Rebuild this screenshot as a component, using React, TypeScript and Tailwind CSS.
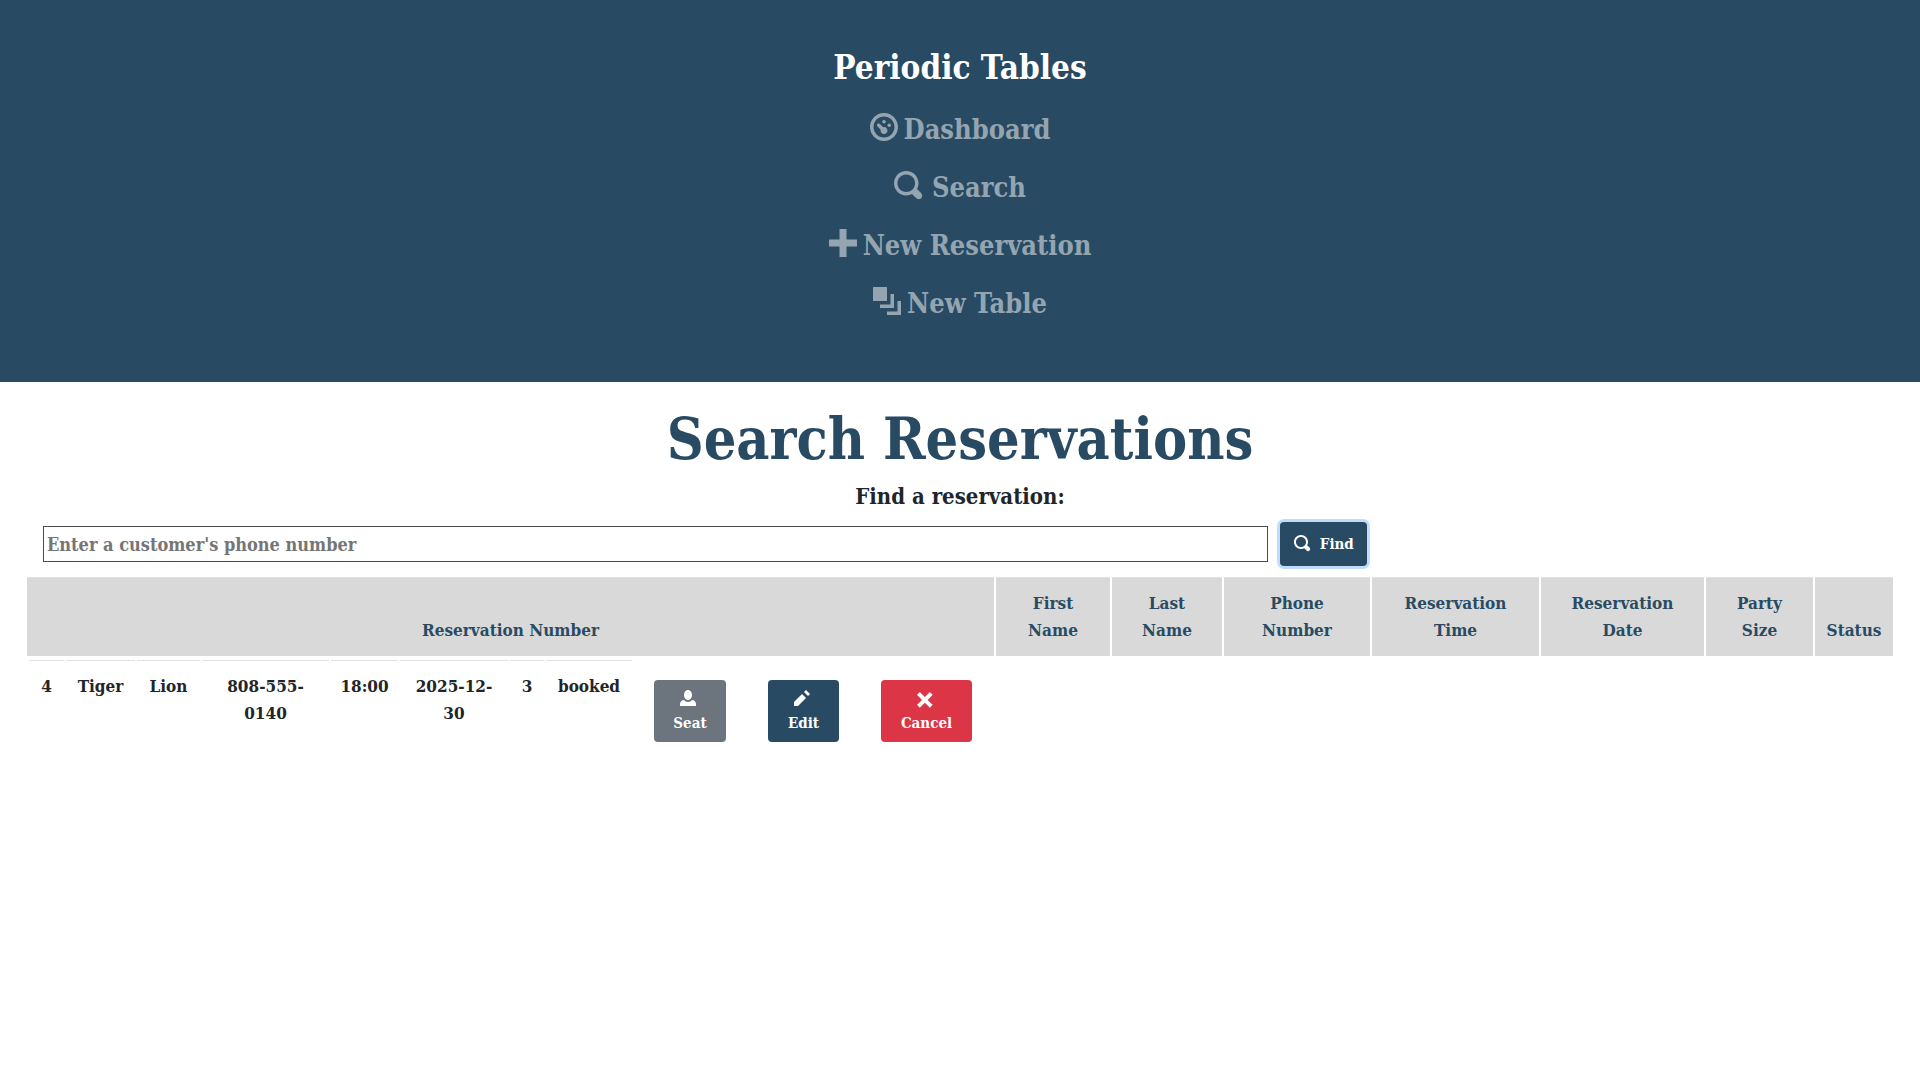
import React from "react";

const paths = {
  dashboard:
    "M4 0c-2.2 0-4 1.8-4 4s1.8 4 4 4 4-1.8 4-4-1.8-4-4-4zm0 1c1.66 0 3 1.34 3 3s-1.34 3-3 3-3-1.34-3-3 1.34-3 3-3zm0 1c-.28 0-.5.22-.5.5s.22.5.5.5.5-.22.5-.5-.22-.5-.5-.5zm-1.66 1a.5.5 0 0 0-.19.84l.91.91c-.02.08-.06.16-.06.25 0 .55.45 1 1 1s1-.45 1-1-.45-1-1-1c-.09 0-.17.04-.25.06l-.91-.91a.5.5 0 0 0-.44-.16.5.5 0 0 0-.06 0zm3.16 0c-.28 0-.5.22-.5.5s.22.5.5.5.5-.22.5-.5-.22-.5-.5-.5z",
  search:
    "M3.5 0c-1.93 0-3.5 1.57-3.5 3.5s1.57 3.5 3.5 3.5c.59 0 1.17-.14 1.66-.41a1 1 0 0 0 .13.13l1 1a1.02 1.02 0 1 0 1.44-1.44l-1-1a1 1 0 0 0-.16-.13c.27-.49.44-1.06.44-1.66 0-1.93-1.55-3.5-3.5-3.5zm0 1c1.39 0 2.5 1.11 2.5 2.5 0 .66-.24 1.27-.66 1.72-.01.01-.02.02-.03.03a1 1 0 0 0-.13.13c-.44.4-1.04.63-1.69.63-1.39 0-2.5-1.11-2.5-2.5s1.11-2.5 2.5-2.5z",
  plus: "M3 0v3h-3v2h3v3h2v-3h3v-2h-3v-3h-2z",
  layers: "M0 0v4h4v-4h-4zm5 2v3h-3v1h4v-4h-1zm2 2v3h-3v1h4v-4h-1z",
  person:
    "M4 0c-1.1 0-2 1.12-2 2.5s.9 2.5 2 2.5 2-1.12 2-2.5-.9-2.5-2-2.5zm-2.09 5c-1.06.05-1.91.92-1.91 2v1h8v-1c0-1.08-.84-1.95-1.91-2-.54.61-1.28 1-2.09 1-.81 0-1.55-.39-2.09-1z",
  pencil: "M6 0l-1 1 2 2 1-1-2-2zm-2 2l-4 4v2h2l4-4-2-2z",
  x: "M1.41 1l-1.41 1.41.72.72 1.78 1.81-1.78 1.78-.72.69 1.41 1.44.72-.72 1.81-1.81 1.78 1.81.69.72 1.44-1.44-.72-.69-1.81-1.78 1.81-1.81.72-.72-1.44-1.41-.69.72-1.78 1.78-1.81-1.78-.72-.72z",
};

type IconName = keyof typeof paths;

function Icon({ name, className }: { name: IconName; className: string }) {
  return (
    <svg viewBox="0 0 8 8" fill="currentColor" aria-hidden="true" className={`overflow-visible ${className}`}>
      <path d={paths[name]} />
    </svg>
  );
}

const links: { icon: IconName; label: string; gap: string }[] = [
  { icon: "dashboard", label: "Dashboard", gap: "gap-1.5" },
  { icon: "search", label: "Search", gap: "gap-2.5" },
  { icon: "plus", label: "New Reservation", gap: "gap-1.5" },
  { icon: "layers", label: "New Table", gap: "gap-1.5" },
];

const columns = [
  { label: "Reservation Number", width: "px-3" },
  { label: "First Name", width: "w-[114px] px-5" },
  { label: "Last Name", width: "w-[110px] px-5" },
  { label: "Phone Number", width: "w-[146px] px-5" },
  { label: "Reservation Time", width: "w-[167px] px-5" },
  { label: "Reservation Date", width: "w-[163px] px-5" },
  { label: "Party Size", width: "w-[107px] px-5" },
  { label: "Status", width: "w-[78px] px-1" },
];

const cells = [
  { value: "4", width: "w-[35px]" },
  { value: "Tiger", width: "w-[69px]" },
  { value: "Lion", width: "w-[63px]" },
  { value: "808-555-0140", width: "w-[127px] px-3" },
  { value: "18:00", width: "w-[67px]" },
  { value: "2025-12-30", width: "w-[108px] px-3" },
  { value: "3", width: "w-[34px]" },
  { value: "booked", width: "w-[86px]" },
];

const actions: { icon: IconName; label: string; style: string }[] = [
  { icon: "person", label: "Seat", style: "w-[72px] bg-[#6c757d]" },
  { icon: "pencil", label: "Edit", style: "w-[71px] bg-[#284b63]" },
  { icon: "x", label: "Cancel", style: "w-[91px] bg-[#dc3545]" },
];

export default function App() {
  return (
    <div className="min-h-screen bg-white font-['Roboto_Slab','DejaVu_Serif_Condensed','DejaVu_Serif',serif] font-bold text-[#212529]">
      <nav className="flex flex-col items-center bg-[#284b63] pt-[41px] pb-[49px] text-center">
        <a href="#" className="text-[33px] leading-[54px] text-white">
          Periodic Tables
        </a>
        <ul className="mt-1.5">
          {links.map((l) => (
            <li key={l.label} className="flex h-[58px] items-center justify-center">
              <a href="#" className={`flex items-center text-[27px] leading-[42px] text-[#94a5b1] ${l.gap}`}>
                <Icon name={l.icon} className="mb-1.5 size-7" />
                {l.label}
              </a>
            </li>
          ))}
        </ul>
      </nav>
      <main className="px-[25px] pt-5 text-center">
        <h1 className="text-[57px] leading-[74px] text-[#284b63]">Search Reservations</h1>
        <form onSubmit={(e) => e.preventDefault()}>
          <label htmlFor="phone" className="block text-[22px] leading-10">
            Find a reservation:
          </label>
          <div className="mt-1.5 flex items-center gap-3 pr-3.5 pl-[18px]">
            <input
              id="phone"
              type="tel"
              placeholder="Enter a customer's phone number"
              className="h-9 w-2/3 border border-[#4a4a4a] px-[3px] text-[18px] placeholder:text-[#757575]"
            />
            <button className="flex h-11 w-[87px] items-center justify-center gap-2.5 rounded bg-[#284b63] text-[15px] text-white ring-3 ring-[#bfdeff]">
              <Icon name="search" className="mb-0.5 size-4" />
              Find
            </button>
          </div>
        </form>
        <table className="mt-[9px] w-full table-fixed border-separate border-spacing-[2px] text-[17px] leading-[27px]">
          <thead>
            <tr>
              {columns.map((c) => (
                <th
                  key={c.label}
                  scope="col"
                  className={`border-t border-[#dee2e6] bg-[#d9d9d9] py-3 align-bottom text-[#284b63] ${c.width}`}
                >
                  {c.label}
                </th>
              ))}
            </tr>
          </thead>
          <tbody>
            <tr>
              <td className="p-0">
                <div className="flex items-start">
                  <table className="border-separate border-spacing-[2px]">
                    <tbody>
                      <tr>
                        {cells.map((c) => (
                          <td key={c.value} className="border-t border-[#dee2e6] px-0 py-3 align-top">
                            <div className={c.width}>{c.value}</div>
                          </td>
                        ))}
                      </tr>
                    </tbody>
                  </table>
                  <div className="mt-[22px] ml-5 flex gap-[42px]">
                    {actions.map((a) => (
                      <button
                        key={a.label}
                        className={`flex h-[62px] flex-col items-center gap-[5px] rounded pt-2.5 text-[15px] leading-6 text-white ${a.style}`}
                      >
                        <Icon name={a.icon} className="mr-1 size-4" />
                        {a.label}
                      </button>
                    ))}
                  </div>
                </div>
              </td>
            </tr>
          </tbody>
        </table>
      </main>
    </div>
  );
}
